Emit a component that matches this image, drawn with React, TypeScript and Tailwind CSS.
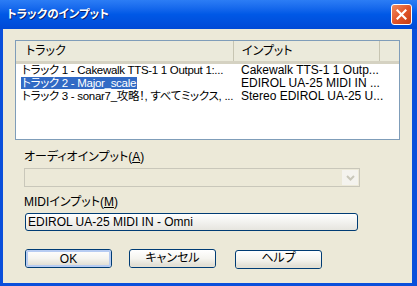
import React from "react";

const font = "font-['Liberation_Sans','Noto_Sans_CJK_JP',sans-serif]";

const rows = [
  { track: "トラック 1 - Cakewalk TTS-1 1 Output 1:...", input: "Cakewalk TTS-1 1 Outp...", selected: false },
  { track: "トラック 2 - Major_scale", input: "EDIROL UA-25 MIDI IN ...", selected: true },
  { track: "トラック 3 - sonar7_攻略！, すべてミックス, ...", input: "Stereo EDIROL UA-25 U...", selected: false },
];

const XpButton: React.FC<{ children: React.ReactNode; isDefault?: boolean }> = ({ children, isDefault }) => (
  <button className="h-[19px] w-[87px] rounded-[3px] border border-[#003C74] bg-gradient-to-b from-[#FFFFFF] via-[#F5F4EF] to-[#DCD9CD] p-0">
    <div
      className={
        "flex h-full w-full items-center justify-center rounded-[2px] text-[12px] leading-none text-black [font-feature-settings:'palt'] " +
        (isDefault ? "border-2 border-[#B7CCF2]" : "border-b-2 border-[#E3E0D5]")
      }
    >
      {children}
    </div>
  </button>
);

const App: React.FC = () => {
  return (
    <div className={`flex h-[286px] w-[417px] flex-col bg-[#0A4FDB] ${font} select-none`}>
      <div className="flex h-[29px] items-center justify-between bg-gradient-to-b from-[#2C7DF5] via-[#0058E6] to-[#0049D6] pl-[7px] pr-[5px]">
        <span className="pt-[1px] text-[11.5px] font-bold text-white [font-feature-settings:'palt'] [text-shadow:1px_1px_0_#0A1E6A]">
          トラックのインプット
        </span>
        <div className="flex h-[21px] w-[21px] items-center justify-center rounded-[3px] border border-white bg-gradient-to-br from-[#F08A5E] via-[#E2552A] to-[#C63D12]">
          <svg width="11" height="11" viewBox="0 0 11 11">
            <path d="M1.5 1.5 L9.5 9.5 M9.5 1.5 L1.5 9.5" stroke="white" strokeWidth="2.2" strokeLinecap="square" />
          </svg>
        </div>
      </div>

      <div className="mb-[3px] ml-[3px] mr-[5px] flex flex-1 flex-col bg-[#ECE9D8] pl-[12px] pt-[11px] text-[12px] text-black">
        <div className="flex h-[100px] w-[385px] flex-col border border-[#7F9DB9] bg-white">
          <div className="flex h-[23px] border-b-[3px] border-[#D5D2C2] bg-[#EBEADB]">
            <div className="flex w-[218px] items-center border-r border-[#C7C5B2] pl-[10px] [font-feature-settings:'palt']">
              トラック
            </div>
            <div className="flex w-[146px] items-center border-r border-[#C7C5B2] pl-[8px] [font-feature-settings:'palt']">
              インプット
            </div>
            <div className="flex-1" />
          </div>
          {rows.map((r) => (
            <div key={r.track} className="flex h-[13px] items-center text-[11.5px] leading-[13px]">
              <div className="w-[218px] shrink-0 whitespace-nowrap pl-[5px]">
                <span
                  className={
                    "px-[1px] tracking-[-0.3px] [font-feature-settings:'palt'] " +
                    (r.selected ? "bg-[#316AC5] text-white" : "")
                  }
                >
                  {r.track}
                </span>
              </div>
              <div className="w-[146px] shrink-0 whitespace-nowrap pl-[7px] text-[12px]">{r.input}</div>
            </div>
          ))}
        </div>

        <div className="mt-[10px] pl-[9px] leading-[15px] [font-feature-settings:'palt']">
          オーディオインプット(<span className="underline">A</span>)
        </div>
        <div className="ml-[9px] mt-[3px] flex h-[19px] w-[336px] border border-[#C9C7BA] bg-[#ECE9D8]">
          <div className="flex-1" />
          <div className="m-[1px] flex w-[16px] items-center justify-center bg-[#F4F3EE]">
            <svg width="9" height="6" viewBox="0 0 9 6">
              <path d="M1 1 L4.5 4.5 L8 1" stroke="#C9C7BA" strokeWidth="2" fill="none" />
            </svg>
          </div>
        </div>

        <div className="mt-[8px] pl-[9px] leading-[15px] [font-feature-settings:'palt']">
          MIDIインプット(<span className="underline">M</span>)
        </div>
        <div className="ml-[10px] mt-[3px] flex h-[18px] w-[333px] items-center rounded-[3px] border border-[#003C74] bg-gradient-to-b from-[#FFFFFF] to-[#E6E5DF] pl-[2px] leading-none">
          EDIROL UA-25 MIDI IN - Omni
        </div>

        <div className="ml-[10px] mt-[18px] flex gap-[17px]">
          <XpButton isDefault>OK</XpButton>
          <XpButton>キャンセル</XpButton>
          <div className="ml-[2px]">
            <XpButton>ヘルプ</XpButton>
          </div>
        </div>
      </div>
    </div>
  );
};

export default App;
